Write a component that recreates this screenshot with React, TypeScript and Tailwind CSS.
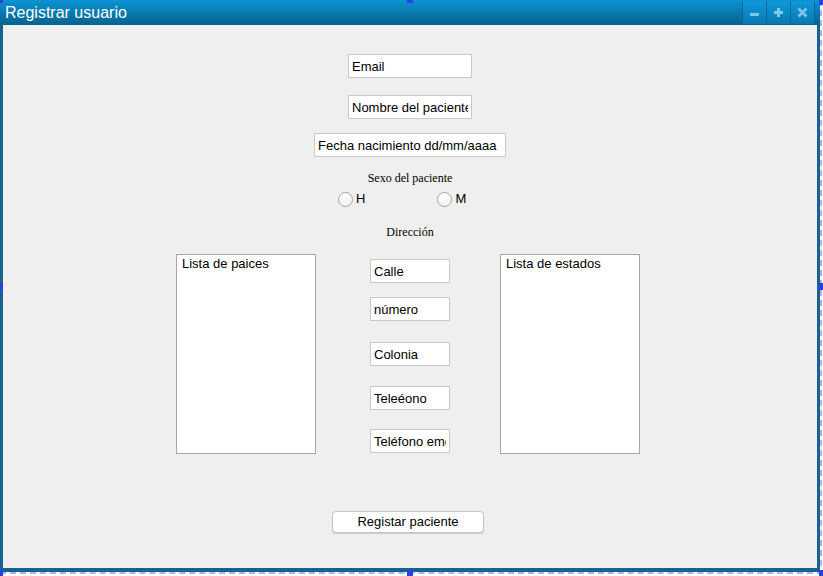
const fieldClass =
  "h-[24px] bg-white border border-[#c9c9c9] px-[3px] text-[13px] text-black outline-none font-['Liberation_Sans',Arial,sans-serif]";

const WinButton = ({ children }: { children: React.ReactNode }) => (
  <div className="w-[24px] h-[23px] flex items-center justify-center bg-gradient-to-b from-[#0e9ad9] to-[#0879b0] border-l border-[#0a6796]">
    {children}
  </div>
);

const Radio = ({ label }: { label: string }) => (
  <label className="flex items-center gap-[3px] h-[16px] text-[13px] leading-[16px] text-black">
    <span className="w-[15px] h-[15px] rounded-full border border-[#a3a3a3] bg-gradient-to-b from-white to-[#f1f1f1]" />
    {label}
  </label>
);

const App = () => {
  return (
    <div className="relative w-[823px] h-[576px] bg-white font-['Liberation_Sans',Arial,sans-serif] overflow-hidden">
      {/* Window */}
      <div className="w-[820px] h-[572px] flex flex-col">
        {/* Title bar */}
        <div className="h-[25px] flex items-center bg-gradient-to-b from-[#0c93d4] to-[#07628f] pl-[5px] pr-[5px]">
          <span className="text-white text-[16px] leading-none flex-1">Registrar usuario</span>
          <div className="flex self-start mt-[1px] border-r border-[#0a6796]">
            <WinButton>
              <svg width="11" height="11" viewBox="0 0 11 11">
                <rect x="1" y="6" width="9" height="3" fill="#7fc6e8" />
              </svg>
            </WinButton>
            <WinButton>
              <svg width="11" height="11" viewBox="0 0 11 11">
                <rect x="1" y="4" width="9" height="3" fill="#7fc6e8" />
                <rect x="4" y="1" width="3" height="9" fill="#7fc6e8" />
              </svg>
            </WinButton>
            <WinButton>
              <svg width="11" height="11" viewBox="0 0 11 11">
                <path d="M1.5 1.5 L9.5 9.5 M9.5 1.5 L1.5 9.5" stroke="#7fc6e8" strokeWidth="2.6" />
              </svg>
            </WinButton>
          </div>
        </div>

        {/* Body */}
        <div className="flex-1 bg-[#efefef] border-l-[3px] border-r-[3px] border-b-[4px] border-[#17628f] flex flex-col">
          <div className="flex flex-col items-center">
            <input readOnly defaultValue="Email" className={`${fieldClass} w-[124px] mt-[29px]`} />
            <input readOnly defaultValue="Nombre del paciente" className={`${fieldClass} w-[124px] mt-[17px]`} />
            <input readOnly defaultValue="Fecha nacimiento dd/mm/aaaa" className={`${fieldClass} w-[192px] mt-[14px]`} />
            <p className="mt-[14px] text-[12px] leading-[14px] text-black font-['Liberation_Serif','Times_New_Roman',serif]">
              Sexo del paciente
            </p>
          </div>

          <div className="flex items-center gap-[72px] pl-[335px] mt-[6px] h-[16px]">
            <Radio label="H" />
            <Radio label="M" />
          </div>

          <p className="mt-[18px] text-center text-[12px] leading-[14px] text-black font-['Liberation_Serif','Times_New_Roman',serif]">
            Dirección
          </p>

          {/* Address row */}
          <div className="flex mt-[15px] pl-[173px]">
            <div className="w-[140px] h-[200px] bg-white border border-[#a6a6a6] px-[5px] pt-[1px] text-[13px] leading-[16px] text-black">
              Lista de paices
            </div>
            <div className="ml-[54px] w-[80px] flex flex-col">
              <input readOnly defaultValue="Calle" className={`${fieldClass} w-[80px] mt-[5px]`} />
              <input readOnly defaultValue="número" className={`${fieldClass} w-[80px] mt-[14px]`} />
              <input readOnly defaultValue="Colonia" className={`${fieldClass} w-[80px] mt-[21px]`} />
              <input readOnly defaultValue="Teleéono" className={`${fieldClass} w-[80px] mt-[20px]`} />
              <input readOnly defaultValue="Teléfono emergencia" className={`${fieldClass} w-[80px] mt-[19px]`} />
            </div>
            <div className="ml-[50px] w-[140px] h-[200px] bg-white border border-[#a6a6a6] px-[5px] pt-[1px] text-[13px] leading-[16px] text-black">
              Lista de estados
            </div>
          </div>

          <div className="flex pl-[329px] mt-[57px]">
            <button className="w-[152px] h-[22px] bg-white border border-[#c4c4c4] rounded-[4px] shadow-[0_1px_1px_rgba(0,0,0,0.15)] text-[13px] text-black">
              Registar paciente
            </button>
          </div>
        </div>
      </div>

      {/* Selection outline and handles */}
      <div className="absolute left-0 top-[572px] w-[823px] border-t-[2px] border-dashed border-[#aab4f0]" />
      <div className="absolute left-[820px] top-0 h-[576px] border-l-[2px] border-dashed border-[#aab4f0]" />
      <div className="absolute left-0 top-0 w-[3px] h-[3px] bg-[#2a3fe0]" />
      <div className="absolute left-[407px] top-0 w-[6px] h-[3px] bg-[#2a3fe0]" />
      <div className="absolute left-[819px] top-0 w-[4px] h-[5px] bg-[#2a3fe0]" />
      <div className="absolute left-0 top-[283px] w-[3px] h-[7px] bg-[#2a3fe0]" />
      <div className="absolute left-[819px] top-[283px] w-[4px] h-[7px] bg-[#2a3fe0]" />
      <div className="absolute left-0 top-[570px] w-[3px] h-[6px] bg-[#2a3fe0]" />
      <div className="absolute left-[407px] top-[570px] w-[6px] h-[6px] bg-[#2a3fe0]" />
      <div className="absolute left-[819px] top-[570px] w-[4px] h-[6px] bg-[#2a3fe0]" />
    </div>
  );
};

export default App;
